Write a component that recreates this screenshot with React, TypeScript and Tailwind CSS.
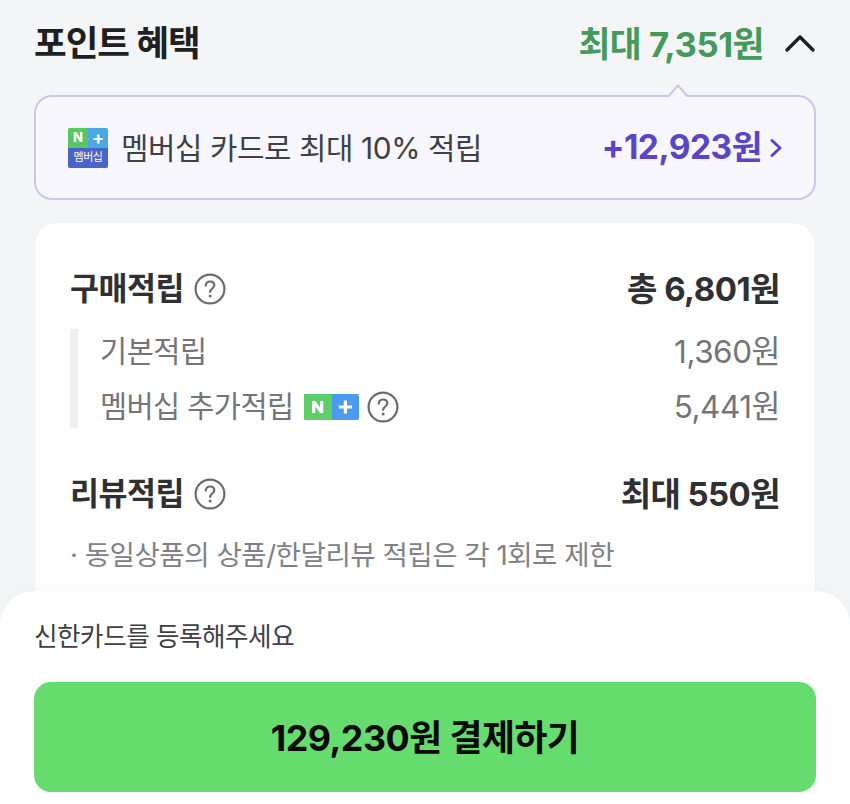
const FONT = "font-['Inter','Noto_Sans_CJK_KR',sans-serif]";

function HelpIcon() {
  return (
    <svg width="32" height="32" viewBox="0 0 32 32" fill="none" className="shrink-0">
      <circle cx="16" cy="16" r="14.4" stroke="#6b6b6b" strokeWidth="2.2" />
      <path d="M11.8 12.6c0-2.5 1.9-4.1 4.3-4.1s4.2 1.5 4.2 3.7c0 3.2-4.2 3.4-4.2 6.8" stroke="#6b6b6b" strokeWidth="2.2" strokeLinecap="round" />
      <circle cx="16.1" cy="22.9" r="1.5" fill="#6b6b6b" />
    </svg>
  );
}

function NPlusBadge() {
  return (
    <svg width="55" height="26" viewBox="0 0 55 26" className="shrink-0">
      <rect width="55" height="26" rx="2" fill="#4b9af0" />
      <path d="M2 0h26v26H2a2 2 0 0 1-2-2V2a2 2 0 0 1 2-2z" fill="#5ccf66" />
      <path d="M8 19V7h3.4l4.6 6.6V7h3.3v12h-3.3l-4.7-6.6V19z" fill="#fff" />
      <path d="M39.8 6.5h3.2v5h5v3.1h-5v5h-3.2v-5h-5v-3.1h5z" fill="#fff" />
    </svg>
  );
}

function MembershipIcon() {
  return (
    <div className="w-10 h-10 shrink-0 rounded-[2px] overflow-hidden flex flex-col">
      <div className="flex h-[20px]">
        <div className="w-1/2 bg-[#55c765] flex items-center justify-center text-white text-[13px] font-extrabold leading-none">N</div>
        <div className="w-1/2 bg-[#4aa8e2] flex items-center justify-center text-white text-[18px] font-bold leading-none">+</div>
      </div>
      <div className="flex-1 bg-[#4a63c8] flex items-center justify-center text-white text-[11px] leading-none tracking-[-0.5px]">멤버십</div>
    </div>
  );
}

export default function App() {
  return (
    <div className={`relative w-[850px] h-[804px] overflow-hidden bg-[#f4f5f7] ${FONT}`}>
      <div className="px-[34px] pt-[19px]">
        <header className="flex items-center justify-between h-[48px]">
          <h1 className="text-[35.5px] font-bold text-[#1f1f21] leading-none tracking-[-1px] pt-[2px]">포인트 혜택</h1>
          <div className="flex items-center gap-[20px]">
            <span className="text-[34.7px] font-bold text-[#45995a] leading-none tracking-[-0.5px] pt-[2px]">최대 7,351원</span>
            <svg width="32" height="20" viewBox="0 0 32 20" fill="none">
              <path d="M3 17 16 4l13 13" stroke="#1f1f21" strokeWidth="3.4" strokeLinecap="round" strokeLinejoin="round" />
            </svg>
          </div>
        </header>

        <div className="relative mt-[28px] h-[105px] rounded-[18px] border-2 border-[#c9c6e8] bg-[#f7f6fd] flex items-center justify-between pl-[32px] pr-[32px]">
          <svg width="22" height="13" viewBox="0 0 22 13" className="absolute right-[125px] -top-[13px]">
            <path d="M1 13 11 1.5 21 13" fill="#f7f6fd" stroke="#c9c6e8" strokeWidth="2" strokeLinejoin="round" />
          </svg>
          <div className="flex items-center gap-[13px]">
            <MembershipIcon />
            <span className="text-[29.8px] text-[#3f4045] leading-none tracking-[-0.4px] pt-[3px]">멤버십 카드로 최대 10% 적립</span>
          </div>
          <div className="flex items-center gap-[8px]">
            <span className="text-[33.5px] font-bold text-[#5a45c8] leading-none tracking-[-0.5px]">+12,923원</span>
            <svg width="12" height="20" viewBox="0 0 12 20" fill="none">
              <path d="M2 2.5 10 10l-8 7.5" stroke="#5a45c8" strokeWidth="3" strokeLinecap="round" strokeLinejoin="round" />
            </svg>
          </div>
        </div>

        <section className="mt-[23px] mx-[1px] h-[500px] rounded-t-[22px] bg-white px-[35px] pt-[46px] shadow-[0_0_2px_rgba(0,0,0,0.06)]">
          <div className="flex items-center justify-between h-[40px]">
            <div className="flex items-center gap-[10px]">
              <span className="text-[31.5px] font-bold text-[#2f3033] leading-none tracking-[-0.5px]">구매적립</span>
              <HelpIcon />
            </div>
            <span className="text-[33px] font-bold text-[#2f3033] leading-none tracking-[-0.5px]">총 6,801원</span>
          </div>

          <div className="mt-[20px] h-[99px] border-l-[8px] border-[#efefef] pl-[22px] flex flex-col justify-between">
            <div className="flex items-center justify-between h-[44px] pt-[2px]">
              <span className="text-[29.5px] text-[#74757a] leading-none tracking-[-0.5px]">기본적립</span>
              <span className="text-[31.5px] text-[#74757a] leading-none tracking-[-0.5px]">1,360원</span>
            </div>
            <div className="flex items-center justify-between h-[44px] pt-[2px]">
              <div className="flex items-center gap-[8px]">
                <span className="text-[29.5px] text-[#74757a] leading-none tracking-[-0.6px] pr-[3px]">멤버십 추가적립</span>
                <NPlusBadge />
                <HelpIcon />
              </div>
              <span className="text-[31.5px] text-[#74757a] leading-none tracking-[-0.5px]">5,441원</span>
            </div>
          </div>

          <div className="mt-[46px] flex items-center justify-between h-[40px]">
            <div className="flex items-center gap-[10px]">
              <span className="text-[31.5px] font-bold text-[#2f3033] leading-none tracking-[-0.5px]">리뷰적립</span>
              <HelpIcon />
            </div>
            <span className="text-[33px] font-bold text-[#2f3033] leading-none tracking-[-0.6px]">최대 550원</span>
          </div>
          <p className="mt-[28px] text-[27.6px] text-[#808186] leading-none tracking-[-0.5px]">· 동일상품의 상품/한달리뷰 적립은 각 1회로 제한</p>
        </section>
      </div>

      <div className="absolute inset-x-0 top-[591px] bottom-0 rounded-t-[34px] bg-white px-[34px] pt-[30px] shadow-[0_-6px_12px_rgba(0,0,0,0.02)]">
        <p className="text-[25.6px] text-[#3f4045] leading-[32px] tracking-[-0.5px]">신한카드를 등록해주세요</p>
        <button className="mt-[29px] w-full h-[110px] rounded-[17px] bg-[#66db6e] text-[35.8px] font-bold text-[#0a0a0a] tracking-[-0.5px] pt-[4px]">129,230원 결제하기</button>
      </div>
    </div>
  );
}
